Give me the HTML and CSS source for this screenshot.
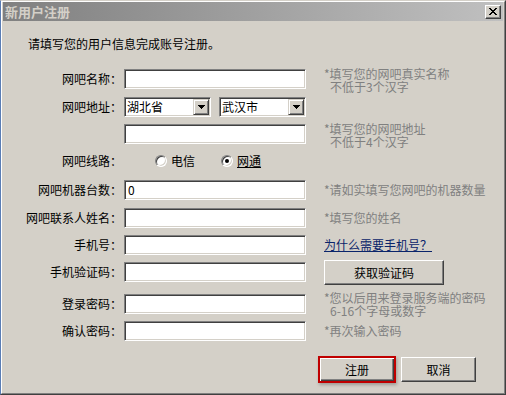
FILE: index.html
```html
<!DOCTYPE html>
<html lang="zh-CN">
<head>
<meta charset="utf-8">
<title>新用户注册</title>
<link rel="stylesheet" href="styles.css">
</head>
<body>
<div class="window">
  <div class="frame">
    <div class="titlebar">
      <span class="title">新用户注册</span>
      <div class="close">
        <svg width="8" height="7" viewBox="0 0 8 7" shape-rendering="crispEdges"><path fill="#000" d="M0 0h2v1H0zM6 0h2v1H6zM1 1h2v1H1zM5 1h2v1H5zM2 2h4v1H2zM3 3h2v1H3zM2 4h4v1H2zM1 5h2v1H1zM5 5h2v1H5zM0 6h2v1H0zM6 6h2v1H6z"/></svg>
      </div>
    </div>
    <p class="intro">请填写您的用户信息完成账号注册。</p>
    <div class="form">
      <div class="label">网吧名称：</div>
      <div class="input"></div>
      <div class="hint two">*填写您的网吧真实名称<span class="ind">不低于3个汉字</span></div>

      <div class="label">网吧地址：</div>
      <div class="selects">
        <div class="select"><span class="val">湖北省</span><span class="drop"><svg width="7" height="4" viewBox="0 0 7 4" shape-rendering="crispEdges"><path fill="#000" d="M0 0h7v1H0zM1 1h5v1H1zM2 2h3v1H2zM3 3h1v1H3z"/></svg></span></div>
        <div class="select"><span class="val">武汉市</span><span class="drop"><svg width="7" height="4" viewBox="0 0 7 4" shape-rendering="crispEdges"><path fill="#000" d="M0 0h7v1H0zM1 1h5v1H1zM2 2h3v1H2zM3 3h1v1H3z"/></svg></span></div>
      </div>
      <div></div>

      <div></div>
      <div class="input"></div>
      <div class="hint two">*填写您的网吧地址<span class="ind">不低于4个汉字</span></div>

      <div class="label short">网吧线路：</div>
      <div class="radios">
        <span class="radio"></span><span class="rtext">电信</span>
        <span class="radio second"><span class="dot"></span></span><span class="rtext focus">网通</span>
      </div>
      <div></div>

      <div class="label">网吧机器台数：</div>
      <div class="input">0</div>
      <div class="hint one">*请如实填写您网吧的机器数量</div>

      <div class="label">网吧联系人姓名：</div>
      <div class="input"></div>
      <div class="hint one">*填写您的姓名</div>

      <div class="label">手机号：</div>
      <div class="input"></div>
      <div class="hint one"><a class="link" href="#">为什么需要手机号？</a></div>

      <div class="label">手机验证码：</div>
      <div class="input"></div>
      <div class="cell"><button class="btn code">获取验证码</button></div>

      <div class="label">登录密码：</div>
      <div class="input"></div>
      <div class="hint two up">*您以后用来登录服务端的密码<span class="ind">6-16个字母或数字</span></div>

      <div class="label">确认密码：</div>
      <div class="input"></div>
      <div class="hint one">*再次输入密码</div>
    </div>
    <div class="actions">
      <button class="btn primary">注册</button>
      <button class="btn cancel">取消</button>
    </div>
  </div>
</div>
</body>
</html>
```

FILE: styles.css
```css
* { box-sizing: border-box; }
html, body { margin: 0; padding: 0; }
body {
  width: 506px;
  height: 395px;
  overflow: hidden;
  background: #d4d0c8;
  font-family: "Noto Sans CJK SC", "Noto Sans", sans-serif;
  font-size: 12px;
  color: #000;
}
.window {
  width: 506px;
  height: 395px;
  border: 1px solid;
  border-color: #d4d0c8 #404040 #404040 #5a7db5;
  background: #d4d0c8;
  display: flex;
  flex-direction: column;
}
.frame {
  flex: 1;
  border: 1px solid;
  border-color: #fff #808080 #808080 #fff;
  padding: 0 1px 1px 1px;
  display: flex;
  flex-direction: column;
}
.titlebar {
  height: 19px;
  background: linear-gradient(to right, #808080, #c0c0c0);
  display: flex;
  align-items: center;
  justify-content: space-between;
  padding: 0 2px;
}
.title {
  color: #d4d0c8;
  font-weight: bold;
  font-size: 13px;
  line-height: 19px;
}
.close {
  width: 16px;
  height: 14px;
  background: #d4d0c8;
  border: 1px solid;
  border-color: #fff #404040 #404040 #fff;
  box-shadow: inset -1px -1px #808080;
  display: flex;
  align-items: center;
  justify-content: center;
}
.close svg { display: block; }
.intro {
  margin: 16px 0 0 25px;
  line-height: 14px;
}
.form {
  margin-top: 18px;
  display: grid;
  grid-template-columns: 121px 182px 1fr;
  grid-template-rows: 28px 27px 28px 28px 28px 27px 27px 32px 27px 20px;
}
.label {
  text-align: right;
  padding-right: 2px;
  height: 20px;
  line-height: 20px;
  white-space: nowrap;
}
.label.short { height: 18px; line-height: 18px; }
.input {
  width: 182px;
  height: 20px;
  background: #fff;
  border: 1px solid;
  border-color: #808080 #fff #fff #808080;
  box-shadow: inset 1px 1px #404040, inset -1px -1px #d4d0c8;
  padding: 0 3px;
  line-height: 18px;
}
.hint {
  padding-left: 18px;
  color: #808080;
  white-space: nowrap;
}
.hint.two { line-height: 13px; margin-top: -2px; }
.hint.two.up { margin-top: -3px; }
.hint.one { line-height: 20px; }
.hint .ind { display: block; padding-left: 6px; }
.link { color: #0a246a; text-decoration: underline; }
.selects {
  display: flex;
  justify-content: space-between;
}
.select {
  width: 87px;
  height: 20px;
  background: #fff;
  border: 1px solid;
  border-color: #808080 #fff #fff #808080;
  box-shadow: inset 1px 1px #404040, inset -1px -1px #d4d0c8;
  display: flex;
  align-items: center;
  padding-left: 2px;
}
.select .val { flex: 1; line-height: 16px; }
.drop {
  width: 16px;
  height: 16px;
  margin: 1px 1px 1px 0;
  background: #d4d0c8;
  border: 1px solid;
  border-color: #d4d0c8 #404040 #404040 #d4d0c8;
  box-shadow: inset 1px 1px #fff, inset -1px -1px #808080;
  display: flex;
  align-items: center;
  justify-content: center;
}
.drop svg { display: block; }
.radios {
  display: flex;
  align-items: center;
  height: 18px;
  padding-left: 31px;
}
.radio {
  width: 12px;
  height: 12px;
  border-radius: 50%;
  background: #fff;
  border: 1px solid;
  border-color: #808080 #fff #fff #808080;
  box-shadow: inset 1px 1px #404040, inset -1px -1px #d4d0c8;
  display: flex;
  align-items: center;
  justify-content: center;
  flex: none;
}
.radio.second { margin-left: 26px; }
.dot {
  width: 4px;
  height: 4px;
  border-radius: 50%;
  background: #000;
}
.rtext { margin-left: 4px; line-height: 18px; }
.rtext.focus { text-decoration: underline; }
.cell { padding-left: 18px; }
.btn {
  font-family: "Noto Sans CJK SC", "Noto Sans", sans-serif;
  font-size: 12px;
  color: #000;
  background: #d4d0c8;
  border: 1px solid;
  border-color: #fff #404040 #404040 #fff;
  box-shadow: inset -1px -1px #808080;
  padding: 0;
  margin: 0;
  line-height: 14px;
  display: flex;
  align-items: center;
  justify-content: center;
}
.btn.code {
  width: 120px;
  height: 25px;
  margin-top: -2px;
}
.actions {
  margin-top: 15px;
  display: flex;
  justify-content: flex-end;
  align-items: center;
  gap: 5px;
  padding-right: 27px;
}
.btn.primary {
  width: 78px;
  height: 27px;
  border: 2px solid #c00000;
  box-shadow: inset 1px 1px #fff, inset -1px -1px #404040, inset -2px -2px #808080, 1px 2px 3px rgba(0,0,0,0.25);
}
.btn.cancel {
  width: 75px;
  height: 25px;
}
```
